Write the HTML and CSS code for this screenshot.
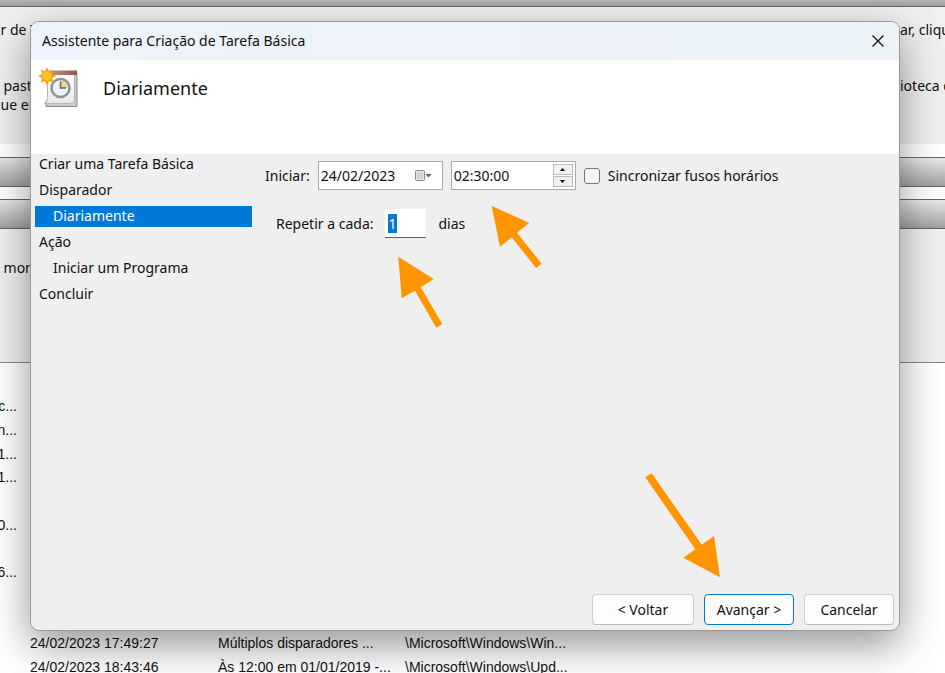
FILE: index.html
```html
<!DOCTYPE html>
<html lang="pt-br">

<head>
    <meta charset="UTF-8">
    <meta name="viewport" content="width=device-width, initial-scale=1.0">
    <title>Assistente para Criação de Tarefa Básica</title>
    <link rel="stylesheet" href="styles.css">
</head>

<body>

    <!-- janela do agendador -->
    <main class="agendador">
        <div class="barra-topo"></div>
        <div class="painel resumo">
            <p class="linha"><span>or de T</span><span class="fim">ar, clique</span></p>
            <p class="linha"><span>a past</span><span class="fim">ioteca do</span></p>
            <p class="linha"><span>que en</span></p>
        </div>
        <div class="barra"></div>
        <div class="barra"></div>
        <div class="painel status">
            <p class="linha"><span>e mon</span></p>
        </div>
        <div class="lista">
            <table class="tarefas">
                <tr><td>c...</td><td></td><td></td><td></td></tr>
                <tr><td>n...</td><td></td><td></td><td></td></tr>
                <tr><td>1...</td><td></td><td></td><td></td></tr>
                <tr><td>1...</td><td></td><td></td><td></td></tr>
                <tr><td></td><td></td><td></td><td></td></tr>
                <tr><td>30...</td><td></td><td></td><td></td></tr>
                <tr><td></td><td></td><td></td><td></td></tr>
                <tr><td>6...</td><td></td><td></td><td></td></tr>
                <tr><td></td><td></td><td></td><td></td></tr>
                <tr><td></td><td></td><td></td><td></td></tr>
                <tr>
                    <td></td>
                    <td>24/02/2023 17:49:27</td>
                    <td>Múltiplos disparadores ...</td>
                    <td>\Microsoft\Windows\Win...</td>
                </tr>
                <tr>
                    <td></td>
                    <td>24/02/2023 18:43:46</td>
                    <td>Às 12:00 em 01/01/2019 -...</td>
                    <td>\Microsoft\Windows\Upd...</td>
                </tr>
            </table>
        </div>
    </main>

    <!-- assistente -->
    <section class="dialogo" role="dialog" aria-labelledby="titulo">
        <header class="titulo">
            <span id="titulo">Assistente para Criação de Tarefa Básica</span>
            <button class="fechar" type="button" aria-label="Fechar">
                <svg width="12" height="12" viewBox="0 0 12 12">
                    <path d="M.5 .5 11.5 11.5M11.5 .5 .5 11.5" stroke="#111" stroke-width="1.3" fill="none" />
                </svg>
            </button>
        </header>

        <div class="cabecalho">
            <svg class="icone" width="42" height="42" viewBox="0 0 42 42">
                <defs>
                    <linearGradient id="topo" x2="1">
                        <stop offset="0" stop-color="#c79a8b" />
                        <stop offset="1" stop-color="#8a5747" />
                    </linearGradient>
                    <linearGradient id="folha" x2="0" y2="1">
                        <stop offset="0" stop-color="#fff" />
                        <stop offset="1" stop-color="#e9e9e9" />
                    </linearGradient>
                </defs>
                <path d="M8 34v5.500h31V6h-3" fill="#c9c9c9" stroke="#8b8b8b" />
                <path d="M9.500 4.500h27v27q0 5-4 5H6q3.500-1 3.500-5z" fill="url(#folha)" stroke="#b5b5b5" />
                <path d="M9 3.500h30V8H9z" fill="url(#topo)" />
                <circle cx="22.500" cy="21" r="9" fill="#edf3f7" stroke="#8c9499" stroke-width="2.500" />
                <path d="M22.500 21v-7.500a7.500 7.500 0 0 1 7.500 7.500z" fill="#f0d27c" />
                <path d="M22.500 14.500V21H28" fill="none" stroke="#47709a" stroke-width="1.500" />
                <path d="M9 0l1.800 4.500 4.700-2-1.700 4.700 4.700 1.800-4.500 2 2 4.700-4.700-1.700L9 18.500l-2-4.500-4.500 1.700 1.700-4.500L0 9l4.500-2L2.500 2.500l4.700 2z" fill="#f5a012" />
                <circle cx="9" cy="9" r="4.500" fill="#ffc229" />
            </svg>
            <h1>Diariamente</h1>
        </div>

        <div class="corpo">
            <ul class="passos">
                <li>Criar uma Tarefa Básica</li>
                <li>Disparador</li>
                <li class="sub atual">Diariamente</li>
                <li>Ação</li>
                <li class="sub">Iniciar um Programa</li>
                <li>Concluir</li>
            </ul>

            <form class="formulario">
                <div class="campos">
                    <label for="txtdata">Iniciar:</label>
                    <div class="caixa">
                        <input type="text" id="txtdata" value="24/02/2023">
                        <button class="calendario" type="button" aria-label="Abrir calendário">
                            <svg width="17" height="12" viewBox="0 0 17 12">
                                <rect x=".5" y=".5" width="9" height="10" rx="1" fill="#e2e0e4" stroke="#8d8a91" />
                                <path d="M2 3.500h6M2 5.500h6M2 7.500h6M3.500 2v7M6.500 2v7" stroke="#c9c6cd" stroke-width=".7" />
                                <path d="M10.500 4h6l-3 3.500z" fill="#4b5d80" />
                            </svg>
                        </button>
                    </div>
                    <div class="caixa">
                        <input type="text" id="txthora" value="02:30:00" aria-label="Hora">
                        <div class="setas">
                            <button type="button" aria-label="Aumentar">
                                <svg width="5" height="3" viewBox="0 0 5 3"><path d="M0 3h5L2.500 0z" /></svg>
                            </button>
                            <button type="button" aria-label="Diminuir">
                                <svg width="5" height="3" viewBox="0 0 5 3"><path d="M0 0h5L2.500 3z" /></svg>
                            </button>
                        </div>
                    </div>
                    <label class="opcao"><input type="checkbox"> Sincronizar fusos horários</label>
                </div>
                <div class="campos repetir">
                    <label for="txtdias">Repetir a cada:</label>
                    <input type="text" id="txtdias" value="1">
                    <span>dias</span>
                </div>
            </form>
        </div>

        <footer class="botoes">
            <button class="voltar" type="button">&lt; Voltar</button>
            <button class="padrao" type="button">Avançar &gt;</button>
            <button type="button">Cancelar</button>
        </footer>

        <!-- setas de destaque -->
        <svg class="seta seta-dias" width="46" height="73" viewBox="0 0 46 73">
            <path d="M.3.700 35.700 23 22.700 31.300 44.300 68 38.300 71.700 17 34.700 3.700 42.300z" />
        </svg>
        <svg class="seta seta-hora" width="52" height="64" viewBox="0 0 52 64">
            <path d="M.7 1 38.300 18 26 27.700 50.700 58.700 45 63 20.700 32.300 9 41.700z" />
        </svg>
        <svg class="seta seta-avancar" width="76" height="106" viewBox="0 0 76 106">
            <path d="M75 105.300 69 64 56.700 72.700 6.700 1.300.3 5.300 50.300 77.300 38.300 85.700z" />
        </svg>
    </section>

    <script>
        document.getElementById("txtdias").select()
    </script>
</body>

</html>
```

FILE: styles.css
```css
* {
    box-sizing: border-box;
}

body {
    margin: 0;
    height: 100vh;
    overflow: hidden;
    position: relative;
    background-color: white;
    color: #111;
    font-family: "Noto Sans", "Open Sans", sans-serif;
    font-size: 14px;
    line-height: 19px;
}

button,
input {
    font: inherit;
    color: inherit;
}

/* janela do agendador */
.agendador {
    height: 100%;
    overflow: hidden;
}

.barra-topo {
    height: 7px;
    background: linear-gradient(#b6b6b6, #a2a2a2);
    border-bottom: 1px solid #666;
}

.painel {
    background-color: #f0f0f0;
}

.resumo {
    height: 137px;
    margin-bottom: 13px;
    padding-top: 13px;
}

.linha {
    display: flex;
    justify-content: space-between;
    margin: 0 0 0 -8px;
    white-space: nowrap;
}

.resumo .linha:first-child {
    margin-bottom: 37px;
}

.fim {
    width: 45px;
}

.barra {
    height: 30px;
    margin-bottom: 12px;
    background: linear-gradient(#e8e8e8, #a0a0a0);
    border-top: 1px solid #666;
    border-bottom: 1px solid #666;
}

.status {
    height: 133px;
    margin-top: -12px;
    padding-top: 29px;
}

.lista {
    border-top: 1px solid #7d8794;
    padding-top: 32px;
}

.tarefas {
    width: 100%;
    height: 284px;
    margin-left: -12px;
    table-layout: fixed;
    border-collapse: collapse;
    font-family: "Liberation Sans", Arial, sans-serif;
    font-size: 14px;
    line-height: 17px;
}

.tarefas td {
    height: 23px;
    padding: 0;
    white-space: nowrap;
}

.tarefas td:nth-child(1) {
    width: 42px;
    padding-right: 13px;
    text-align: right;
}

.tarefas td:nth-child(2) {
    width: 188px;
}

.tarefas td:nth-child(3) {
    width: 187px;
}

/* assistente */
.dialogo {
    position: absolute;
    inset: 21px 45px 42px 30px;
    display: flex;
    flex-direction: column;
    background-color: #efefef;
    border: 1px solid #999;
    border-radius: 9px;
    box-shadow: 0 14px 42px rgba(0, 0, 0, 0.42);
}

.titulo {
    display: flex;
    justify-content: space-between;
    align-items: center;
    height: 38px;
    padding: 0 9px 1px 11px;
    border-radius: 8px 8px 0 0;
    background: linear-gradient(90deg, #eef2fa, #ebf3f7);
}

.fechar {
    display: flex;
    padding: 6px;
    border: 0;
    background: none;
}

.cabecalho {
    display: flex;
    align-items: flex-start;
    gap: 23px;
    height: 94px;
    padding: 7px;
    background-color: white;
}

.cabecalho h1 {
    margin: 8px 0;
    font-size: 18px;
    font-weight: normal;
    line-height: 26px;
}

.corpo {
    flex: 1;
    display: flex;
    gap: 13px;
    padding-left: 4px;
}

.passos {
    display: flex;
    flex-direction: column;
    gap: 5px;
    width: 217px;
    margin: 0;
    padding: 0;
    list-style: none;
}

.passos li {
    padding: 0 0 2px 4px;
}

.passos .sub {
    padding-left: 18px;
}

.passos .atual {
    background-color: #0078d7;
    color: white;
}

.formulario {
    padding-top: 7px;
}

.campos {
    display: flex;
    align-items: center;
    gap: 8px;
}

.caixa {
    display: flex;
    align-items: center;
    width: 125px;
    height: 29px;
    padding: 2px;
    border: 1px solid #aaa;
    background-color: white;
}

.caixa input {
    flex: 1;
    min-width: 0;
    padding: 0;
    border: 0;
    outline: 0;
    background: none;
}

.calendario {
    display: flex;
    padding: 0 8px;
    border: 0;
    background: none;
}

.setas {
    display: flex;
    flex-direction: column;
    gap: 1px;
}

.setas button {
    display: flex;
    align-items: center;
    justify-content: center;
    width: 20px;
    height: 11px;
    padding: 0;
    border: 1px solid #bbb;
    background-color: #f0f0f0;
}

.opcao {
    display: flex;
    align-items: center;
    gap: 8px;
}

.opcao input {
    appearance: none;
    width: 16px;
    height: 16px;
    margin: 0;
    border: 1px solid #777;
    border-radius: 3px;
    background-color: #f5f5f5;
}

.repetir {
    gap: 12px;
    margin-top: 19px;
    padding-left: 11px;
}

#txtdias {
    width: 41px;
    height: 29px;
    padding: 0 3px;
    border: 0;
    border-bottom: 1px solid #0078d7;
    outline: 0;
    background-color: white;
}

#txtdias::selection {
    background-color: #0078d7;
    color: white;
}

.botoes {
    display: flex;
    justify-content: flex-end;
    gap: 10px;
    padding: 5px;
}

.botoes button {
    width: 90px;
    height: 31px;
    padding: 0;
    border: 1px solid #d0d0d0;
    border-bottom-color: #bbb;
    border-radius: 4px;
    background-color: #fdfdfd;
}

.botoes .voltar {
    width: 102px;
}

.botoes .padrao {
    border-color: #0078d4;
}

.seta {
    position: absolute;
    fill: #ff9500;
}

.seta-dias {
    left: 367px;
    top: 234px;
}

.seta-hora {
    left: 460px;
    top: 183px;
}

.seta-avancar {
    right: 178px;
    bottom: 52px;
}
```
